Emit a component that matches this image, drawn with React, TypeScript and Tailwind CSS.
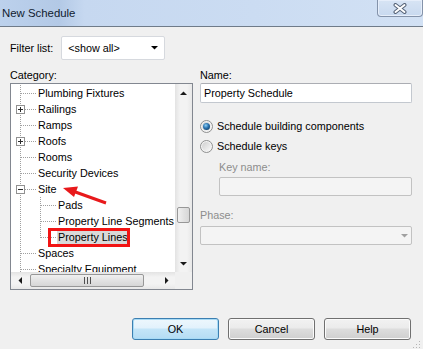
import React from "react";

type Row = { label: string; level: 1 | 2; box?: "+" | "-"; last?: boolean; selected?: boolean };

const rows: Row[] = [
  { label: "Plumbing Fixtures", level: 1 },
  { label: "Railings", level: 1, box: "+" },
  { label: "Ramps", level: 1 },
  { label: "Roofs", level: 1, box: "+" },
  { label: "Rooms", level: 1 },
  { label: "Security Devices", level: 1 },
  { label: "Site", level: 1, box: "-" },
  { label: "Pads", level: 2 },
  { label: "Property Line Segments", level: 2 },
  { label: "Property Lines", level: 2, last: true, selected: true },
  { label: "Spaces", level: 1 },
  { label: "Specialty Equipment", level: 1 },
];

const dot = { stroke: "#a0a0a0", strokeWidth: 1, strokeDasharray: "1 1" };

function Connector({ row }: { row: Row }) {
  const w = row.level === 1 ? 27 : 47;
  return (
    <svg width={w} height={16} className="shrink-0" shapeRendering="crispEdges">
      <line x1={9.5} y1={0} x2={9.5} y2={16} {...dot} />
      {row.level === 1 ? (
        <line x1={row.box ? 14 : 10} y1={8.5} x2={26} y2={8.5} {...dot} />
      ) : (
        <>
          <line x1={29.5} y1={0} x2={29.5} y2={row.last ? 9 : 16} {...dot} />
          <line x1={30} y1={8.5} x2={46} y2={8.5} {...dot} />
        </>
      )}
      {row.box && (
        <>
          <rect x={5.5} y={4.5} width={8} height={8} fill="#fff" stroke="#919191" />
          <line x1={7} y1={8.5} x2={12} y2={8.5} stroke="#2b2b2b" />
          {row.box === "+" && <line x1={9.5} y1={6} x2={9.5} y2={11} stroke="#2b2b2b" />}
        </>
      )}
    </svg>
  );
}

function Arrow({ dir, color = "#1a1a1a" }: { dir: "up" | "down" | "left" | "right"; color?: string }) {
  const pts = {
    up: "0,4 7,4 3.5,0.5",
    down: "0,0 7,0 3.5,3.5",
    left: "4,0 4,7 0.5,3.5",
    right: "0,0 0,7 3.5,3.5",
  }[dir];
  const vert = dir === "up" || dir === "down";
  return (
    <svg width={vert ? 7 : 4} height={vert ? 4 : 7}>
      <polygon points={pts} fill={color} />
    </svg>
  );
}

function Radio({ checked }: { checked?: boolean }) {
  return (
    <svg width={13} height={13} className="shrink-0">
      <defs>
        <linearGradient id="rg" x1="0" y1="0" x2="1" y2="1">
          <stop offset="0" stopColor="#cfcfcf" />
          <stop offset="1" stopColor="#f8f8f8" />
        </linearGradient>
        <radialGradient id="rd" cx="0.4" cy="0.35" r="0.7">
          <stop offset="0" stopColor="#8fd0f5" />
          <stop offset="0.55" stopColor="#2a73b0" />
          <stop offset="1" stopColor="#15456e" />
        </radialGradient>
      </defs>
      <circle cx={6.5} cy={6.5} r={6} fill="#f4f4f4" stroke="#8e8f8f" />
      <circle cx={6.5} cy={6.5} r={4.5} fill="url(#rg)" />
      {checked && <circle cx={6.5} cy={6.5} r={3.5} fill="url(#rd)" />}
    </svg>
  );
}

function Button({ label, primary }: { label: string; primary?: boolean }) {
  return (
    <div
      className={
        "w-[87px] h-[22px] rounded-[3px] border flex items-center justify-center text-black " +
        (primary
          ? "border-[#3c7fb1] bg-[linear-gradient(to_bottom,#edf7fd_0%,#e2f2fc_45%,#c4e5f8_50%,#b4dcf4_100%)] shadow-[inset_0_0_0_1px_#a8dbf6]"
          : "border-[#707070] bg-[linear-gradient(to_bottom,#f2f2f2_0%,#ebebeb_45%,#dddddd_50%,#cfcfcf_100%)] shadow-[inset_0_0_0_1px_#fbfbfb]")
      }
    >
      {label}
    </div>
  );
}

export default function App() {
  return (
    <div
      className="relative w-[423px] h-[349px] bg-[#f0f0f0] overflow-hidden flex flex-col text-[10.8px] leading-[16px] text-black"
      style={{ fontFamily: '"Liberation Sans", Arial, sans-serif' }}
    >
      {/* title bar */}
      <div className="h-[27px] shrink-0 flex items-start justify-between border-b border-[#6f7b89] bg-[linear-gradient(to_right,#bcd1ec,#b3c9e6_14%,#c6d8f0_20%,#cbdcf2_60%,#d2e1f4)]">
        <span className="pl-[2px] pt-[5px] text-[11.4px] text-[#10202f]">New Schedule</span>
        <div className="w-[46px] h-[17px] rounded-b-[4px] border border-t-0 border-[#8493aa] bg-[linear-gradient(to_bottom,#d7e4f4,#c8d9ef)] shadow-[inset_0_0_0_1px_#e6eefa] flex items-center justify-center">
          <svg width={14} height={11}>
            <path d="M2.5 2 L11.5 9 M11.5 2 L2.5 9" stroke="#566377" strokeWidth={4} strokeLinecap="round" />
            <path d="M2.5 2 L11.5 9 M11.5 2 L2.5 9" stroke="#ffffff" strokeWidth={2} strokeLinecap="round" />
          </svg>
        </div>
      </div>

      {/* filter */}
      <div className="flex items-center px-[10px] mt-[9px] gap-[8px]">
        <span>Filter list:</span>
        <div className="w-[104px] h-[24px] bg-white border border-[#d6d9de] rounded-[2px] flex items-center justify-between pl-[6px] pr-[6px]">
          <span>&lt;show all&gt;</span>
          <Arrow dir="down" color="#000" />
        </div>
      </div>

      {/* columns */}
      <div className="flex px-[10px] mt-[7px] gap-[7px]">
        <div className="w-[183px] shrink-0 flex flex-col">
          <span>Category:</span>
          <div className="h-[207px] border border-[#828790] bg-white flex flex-col">
            <div className="flex flex-1 min-h-0">
              <div className="flex-1 overflow-hidden pt-[1px]">
                {rows.map((r) => (
                  <div key={r.label} className="flex h-[16px] items-center whitespace-nowrap">
                    <Connector row={r} />
                    <span className={r.selected ? "bg-[#d9d9d9] px-[1px] -ml-[1px]" : ""}>{r.label}</span>
                  </div>
                ))}
              </div>
              {/* vertical scrollbar */}
              <div className="w-[17px] flex flex-col bg-[linear-gradient(to_right,#e3e3e3,#f3f3f3_30%,#f3f3f3_70%,#e8e8e8)]">
                <div className="h-[17px] flex items-center justify-center">
                  <Arrow dir="up" />
                </div>
                <div className="flex-1 flex flex-col px-[2px]">
                  <div className="mt-[106px] h-[16px] rounded-[2px] border border-[#979797] bg-[linear-gradient(to_right,#f0f0f0,#e2e2e2_50%,#d6d6d6)]" />
                </div>
                <div className="h-[17px] flex items-center justify-center">
                  <Arrow dir="down" />
                </div>
              </div>
            </div>
            <div className="h-[17px] flex">
              <div className="flex-1 flex items-center bg-[linear-gradient(to_bottom,#e3e3e3,#f3f3f3_30%,#f3f3f3_70%,#e8e8e8)]">
                <div className="w-[17px] h-full flex items-center justify-center">
                  <Arrow dir="left" />
                </div>
                <div className="flex-1 h-full py-[2px]">
                  <div className="ml-[2px] w-[114px] h-full rounded-[2px] border border-[#979797] bg-[linear-gradient(to_bottom,#f0f0f0,#e2e2e2_50%,#d6d6d6)] flex items-center justify-center">
                    <svg width={7} height={7}>
                      <path d="M0.5 0 V7 M3.5 0 V7 M6.5 0 V7" stroke="#505050" />
                    </svg>
                  </div>
                </div>
                <div className="w-[17px] h-full flex items-center justify-center">
                  <Arrow dir="right" />
                </div>
              </div>
              <div className="w-[17px] bg-[#f0f0f0]" />
            </div>
          </div>
        </div>

        <div className="w-[212px] flex flex-col">
          <span>Name:</span>
          <div className="h-[20px] bg-white border border-[#c3c8cf] border-t-[#abadb3] rounded-[2px] flex items-center pl-[3px]">
            Property Schedule
          </div>
          <div className="mt-[15px] h-[16px] flex items-center gap-[4px]">
            <Radio checked />
            <span>Schedule building components</span>
          </div>
          <div className="mt-[4px] h-[16px] flex items-center gap-[4px]">
            <Radio />
            <span>Schedule keys</span>
          </div>
          <span className="mt-[5px] ml-[19px] text-[#8d8d8d]">Key name:</span>
          <div className="mt-[2px] ml-[19px] h-[19px] bg-[#f4f4f4] border border-[#c2c2c2] rounded-[2px]" />
          <span className="mt-[11px] text-[#8d8d8d]">Phase:</span>
          <div className="mt-[3px] h-[19px] bg-[#f4f4f4] border border-[#c2c2c2] rounded-[2px] flex items-center justify-end pr-[3px]">
            <Arrow dir="down" color="#a0a0a0" />
          </div>
        </div>
      </div>

      {/* buttons */}
      <div className="mt-auto mb-[9px] pr-[12px] flex justify-end gap-[9px]">
        <Button label="OK" primary />
        <Button label="Cancel" />
        <Button label="Help" />
      </div>

      {/* annotations and grip */}
      <svg className="absolute left-0 top-0 pointer-events-none" width={423} height={349}>
        <rect x={49.5} y={229.5} width={79} height={16} fill="none" stroke="#f21414" strokeWidth={3} />
        <line x1={106} y1={203} x2={74} y2={191.5} stroke="#e8191b" strokeWidth={3} />
        <polygon points="63,188 78,186.5 74,197" fill="#e8191b" />
        <g fill="#b5b5b5">
          <rect x={419} y={341} width={1} height={1} />
          <rect x={416} y={344} width={1} height={1} />
          <rect x={419} y={344} width={1} height={1} />
          <rect x={413} y={347} width={1} height={1} />
          <rect x={416} y={347} width={1} height={1} />
          <rect x={419} y={347} width={1} height={1} />
        </g>
      </svg>
    </div>
  );
}
